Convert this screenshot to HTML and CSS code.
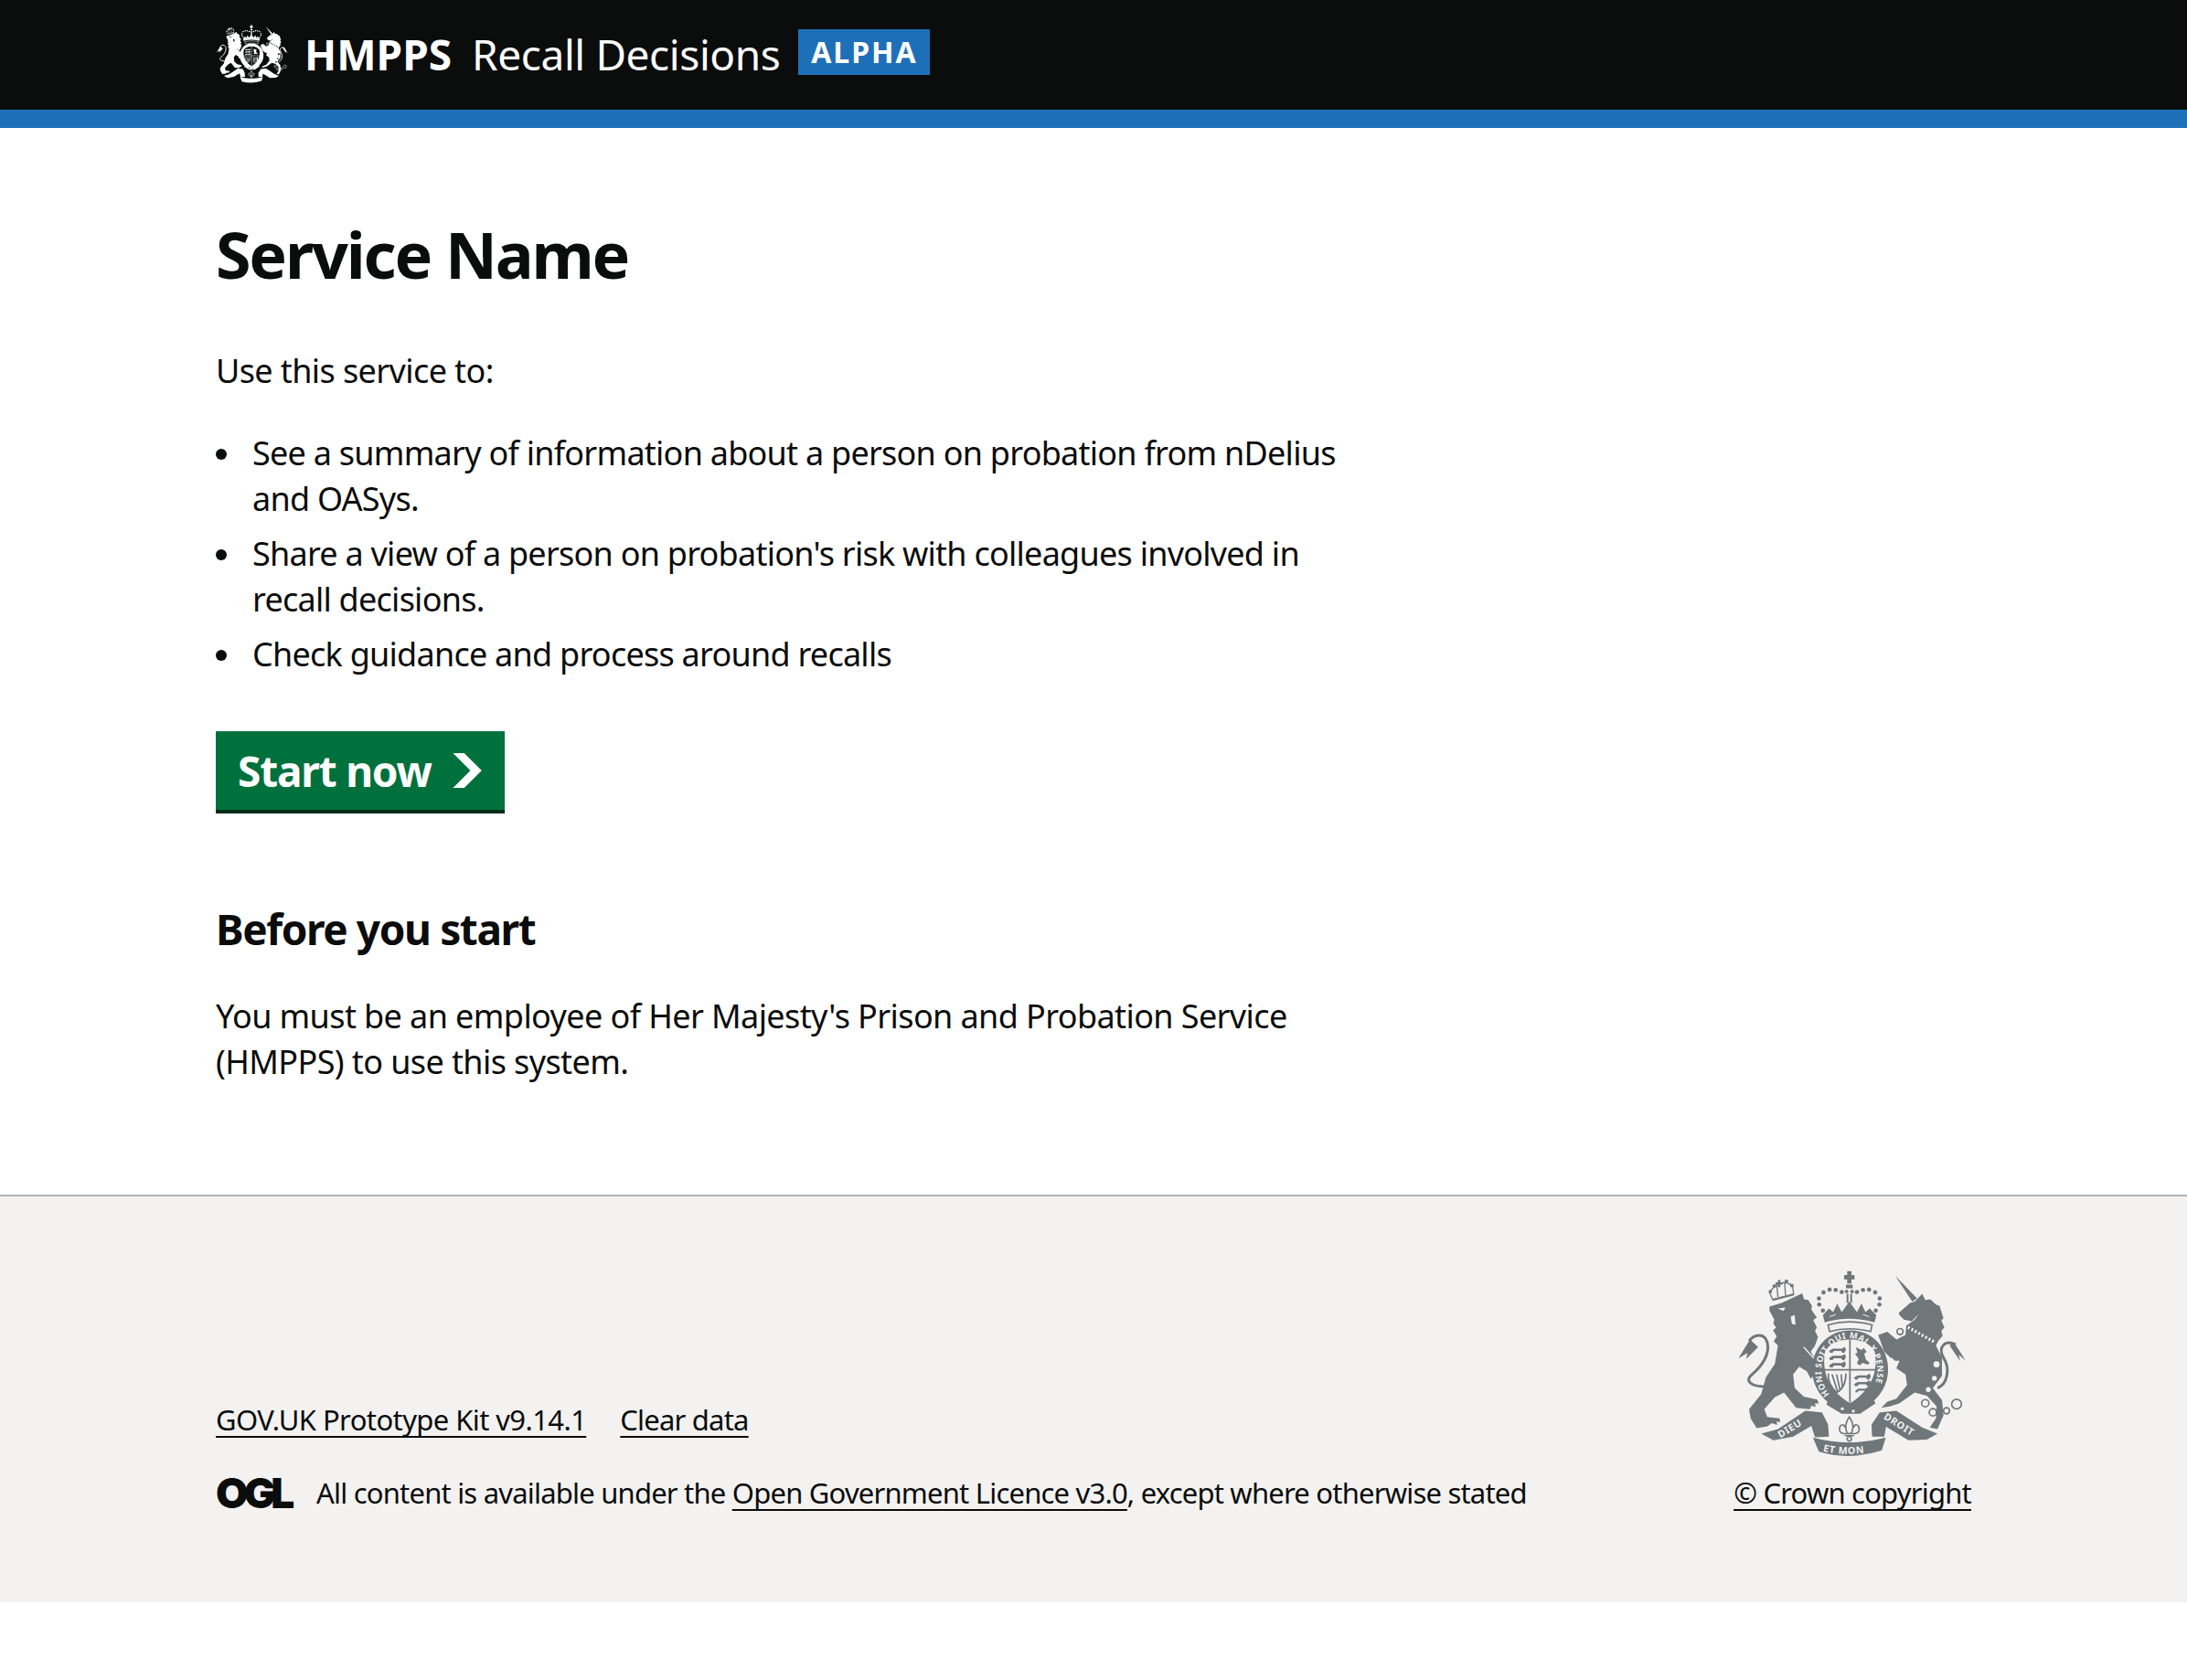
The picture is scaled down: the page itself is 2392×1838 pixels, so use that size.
FILE: index.html
```html
<!DOCTYPE html>
<html lang="en">
<head>
    <meta charset="UTF-8">
    <meta name="viewport" content="width=device-width, initial-scale=1.0">
    <title>Service Name - Recall Decisions</title>
    <link rel="stylesheet" href="styles.css">
</head>
<body>
    <header class="site-header">
        <div class="width-container header-inner">
            <svg class="header-crest" viewBox="110 50 770 620" aria-hidden="true"><use href="#crestArt"/></svg>
            <span class="header-org">HMPPS</span>
            <span class="header-service">Recall Decisions</span>
            <strong class="tag">ALPHA</strong>
        </div>
    </header>

    <main class="width-container main-wrapper">
        <div class="two-thirds">
            <h1 class="heading-l">Service Name</h1>
            <p class="body">Use this service to:</p>
            <ul class="bullets">
                <li>See a summary of information about a person on probation from nDelius and OASys.</li>
                <li>Share a view of a person on probation's risk with colleagues involved in recall decisions.</li>
                <li>Check guidance and process around recalls</li>
            </ul>
            <a href="#" class="button-start">
                <span>Start now</span>
                <svg class="button-icon" viewBox="0 0 33 40" aria-hidden="true"><path d="M0 0h13l20 20-20 20H0l20-20z"/></svg>
            </a>
            <h2 class="heading-m">Before you start</h2>
            <p class="body body-last">You must be an employee of Her Majesty's Prison and Probation Service (HMPPS) to use this system.</p>
        </div>
    </main>

    <footer class="site-footer">
        <div class="width-container footer-inner">
            <div class="footer-meta">
                <ul class="footer-links">
                    <li><a href="#">GOV.UK Prototype Kit v9.14.1</a></li>
                    <li><a href="#">Clear data</a></li>
                </ul>
                <div class="licence">
                    <span class="ogl">OGL</span>
                    <span>All content is available under the <a href="#">Open Government Licence v3.0</a>, except where otherwise stated</span>
                </div>
            </div>
            <div class="copyright">
                <svg class="footer-crest" viewBox="110 50 770 620" aria-hidden="true">
                    <g id="crestArt">
                        <!-- lion -->
                        <path class="ink" d="M222 172L262 160L330 128L336 148L350 150L362 170L360 182L378 208L366 216L378 240L372 252L382 272L372 300L358 320L392 380L386 398L376 392L378 410L364 402L358 410L345 385L320 370L300 395L305 440L335 468L380 478L384 492L372 490L374 502L360 498L355 510L310 505L270 455L240 470L205 510L215 535L255 540L258 552L245 550L248 562L230 556L215 566L180 572L160 540L155 510L195 460L210 405L240 360L250 300L236 286L246 270L234 250L244 240L235 228L238 215L222 185Z"/>
                        <path class="line" stroke-width="9" d="M205 435C170 435 135 420 165 395C195 370 225 330 215 290C205 255 170 265 155 285"/>
                        <path class="ink" d="M158 280L120 342L150 325L145 345L185 305Z"/>
                        <path class="cut" d="M250 178L275 175L268 186ZM292 205L305 200L308 232L296 228Z"/>
                        <path class="cut-line" stroke-width="4" d="M335 305L388 365"/>
                        <path class="line" stroke-width="7" d="M232 150L302 132"/>
                        <path class="line" stroke-width="4" d="M222 124Q262 74 298 104L302 132M232 148L222 124M250 140L246 100M275 134L272 92"/>
                        <path class="ink" d="M250 84H258V92H266V99H258V108H250V99H242V92H250Z"/>
                        <circle class="ink" cx="225" cy="122" r="6"/><circle class="ink" cx="238" cy="104" r="6"/><circle class="ink" cx="278" cy="88" r="6"/><circle class="ink" cx="296" cy="103" r="6"/>
                        <!-- unicorn -->
                        <path class="ink" d="M636 70L708 145L692 155ZM648 192L685 160L700 155L725 130L735 150L752 148L770 165L782 170L795 210L788 218L798 240L788 252L792 268L778 285L770 300L790 340L790 400L760 440L790 480L795 530L775 575L750 570L770 540L772 500L740 465L700 455L650 490L620 500L590 505L610 485L640 475L675 430L670 395L640 375L650 350L620 340L600 320L580 265L610 255L640 280L670 265L672 235L700 215L715 195L690 220L665 215L650 200Z"/>
                        <path class="line" stroke-width="9" d="M775 440C805 430 820 380 795 340C775 305 800 280 835 297"/>
                        <path class="ink" d="M830 290L868 350L845 330L850 352L815 300Z"/>
                        <path class="cut-line" stroke-width="10" stroke-dasharray="6 7" d="M678 240L768 290"/>
                        <circle class="cut" cx="772" cy="362" r="10"/><circle class="cut" cx="765" cy="408" r="8"/><circle class="cut" cx="745" cy="445" r="8"/>
                        <circle class="ring" cx="735" cy="490" r="12"/><circle class="ring" cx="760" cy="520" r="12"/><circle class="ring" cx="805" cy="515" r="10"/><circle class="ring" cx="838" cy="493" r="16"/>
                        <circle class="ring" cx="652" cy="254" r="10"/><circle class="ring" cx="640" cy="338" r="10"/>
                        <!-- royal crown -->
                        <path class="ink" d="M478 55H492V68H502V82H492V96H478V82H468V68H478ZM474 100H496V112H474ZM476 130H482V160H476ZM488 130H494V160H488ZM398 200L418 178L432 190L445 162L460 190L485 155L510 190L525 162L538 190L552 178L574 200L568 224Q485 200 404 224Z"/>
                        <g class="ink">
                            <circle cx="398" cy="185" r="7"/><circle cx="386" cy="165" r="7"/><circle cx="385" cy="145" r="7"/><circle cx="400" cy="125" r="7"/><circle cx="420" cy="116" r="7"/><circle cx="440" cy="117" r="7"/><circle cx="460" cy="124" r="7"/><circle cx="476" cy="122" r="6"/>
                            <circle cx="572" cy="185" r="7"/><circle cx="584" cy="165" r="7"/><circle cx="585" cy="145" r="7"/><circle cx="570" cy="125" r="7"/><circle cx="550" cy="116" r="7"/><circle cx="530" cy="117" r="7"/><circle cx="510" cy="124" r="7"/><circle cx="494" cy="122" r="6"/>
                        </g>
                        <path class="cut-line" stroke-width="3" d="M420 205L440 198M530 198L550 205"/>
                        <!-- garter and shield -->
                        <path class="ink" d="M487 250C565 250 618 315 612 390C607 450 562 505 487 518C412 505 367 450 362 385C360 315 410 250 487 250Z"/>
                        <path class="band" d="M415 232Q485 212 560 232L555 254Q485 236 420 254Z"/>
                        <path class="cut" d="M405 320C420 292 450 280 487 280C524 280 552 292 569 320C578 370 570 440 487 490C404 440 396 370 405 320Z"/>
                        <path class="line" stroke-width="5" d="M487 280V488M399 380H575"/>
                        <path class="ink" d="M418 318l12-8h30l10-6 4 10-6 10h-6l-4-6h-24l-4 6h-8ZM418 342l12-8h30l10-6 4 10-6 10h-6l-4-6h-24l-4 6h-8ZM418 366l12-8h30l10-6 4 10-6 10h-6l-4-6h-24l-4 6h-8ZM500 406l12-8h30l10-6 4 10-6 10h-6l-4-6h-24l-4 6h-8ZM500 428l12-8h30l10-6 4 10-6 10h-6l-4-6h-24l-4 6h-8ZM504 450l10-8h24l8-5 3 9-5 8h-5l-3-5h-20l-4 5h-6ZM506 305l20 10 6-8 10 14-8 6 6 20 12 10-6 6-18-6-8 8-10-6 6-14-12-18 8-4Z"/>
                        <path class="line" stroke-width="5" d="M416 392Q413 425 443 455Q473 440 474 392M428 395L446 450M443 395L454 445M458 395L462 435"/>
                        <path class="ink" d="M415 478L470 495L540 495L565 480L572 490L520 525H460L410 495Z"/>
                        <circle class="cut" cx="462" cy="508" r="5"/><circle class="cut" cx="498" cy="516" r="5"/>
                        <!-- motto ribbon -->
                        <path class="ink" d="M195 590L250 575L340 515L395 520L415 560L418 600L372 602L360 565L300 600L235 612ZM775 590L725 570L640 515L585 520L558 560L560 600L600 600L606 568L680 612L740 610ZM365 603Q485 635 605 603L592 645Q485 680 385 650Z"/>
                        <path class="fleur" d="M485 535Q505 565 491 590H479Q465 565 485 535ZM477 590Q445 592 455 565Q465 555 472 570M493 590Q525 592 515 565Q505 555 498 570M470 597H500M485 597Q470 610 485 615Q500 610 485 597"/>
                    </g>
                    <path id="garterArc" fill="none" d="M420 461A92 108 0 1 1 550 461"/>
                    <path id="dieuArc" fill="none" d="M258 605L365 540"/>
                    <path id="droitArc" fill="none" d="M596 540L700 605"/>
                    <path id="etArc" fill="none" d="M398 648Q485 668 575 645"/>
                    <text class="crest-text garter"><textPath href="#garterArc">HONI SOIT QUI MAL Y PENSE</textPath></text>
                    <text class="crest-text motto"><textPath href="#dieuArc">DIEU</textPath></text>
                    <text class="crest-text motto"><textPath href="#droitArc">DROIT</textPath></text>
                    <text class="crest-text motto"><textPath href="#etArc">ET MON</textPath></text>
                </svg>
                <a href="#">© Crown copyright</a>
            </div>
        </div>
    </footer>
</body>
</html>
```

FILE: styles.css
```css
/* Base */
body {
    margin: 0;
    font-family: "Noto Sans", Arial, sans-serif;
    color: #0b0c0c;
    background: white;
}

a {
    color: #0b0c0c;
    text-decoration-thickness: 2px;
    text-underline-offset: 6px;
    text-decoration-skip-ink: none;
}

.width-container {
    width: 1920px;
    margin: 0 auto;
}

/* Crest parts */
.ink {
    fill: currentColor;
}

.line {
    fill: none;
    stroke: currentColor;
}

.ring {
    fill: none;
    stroke: currentColor;
    stroke-width: 5;
}

.fleur {
    fill: none;
    stroke: currentColor;
    stroke-width: 5;
}

.band {
    fill: var(--crest-bg);
    stroke: currentColor;
    stroke-width: 5;
}

.cut {
    fill: var(--crest-bg);
}

.cut-line {
    fill: none;
    stroke: var(--crest-bg);
}

.crest-text {
    fill: var(--crest-bg);
    font-family: "Noto Sans", Arial, sans-serif;
    font-weight: 700;
}

.garter {
    font-size: 28px;
    letter-spacing: 1.5px;
}

.motto {
    font-size: 32px;
    letter-spacing: 2px;
}

/* Header */
.site-header {
    height: 120px;
    background-color: #0b0c0c;
    border-bottom: 20px solid #1d70b8;
    color: white;
}

.header-inner {
    display: flex;
    align-items: flex-start;
    height: 120px;
}

.header-crest {
    --crest-bg: #0b0c0c;
    width: 80px;
    height: 68px;
    margin: 25px 17px 0 0;
    color: white;
}

.header-org {
    margin-top: 28px;
    font-size: 46px;
    line-height: 62px;
    font-weight: 700;
}

.header-service {
    margin: 28px 0 0 22px;
    font-size: 46px;
    line-height: 62px;
    letter-spacing: -0.4px;
}

.tag {
    margin: 32px 0 0 20px;
    width: 144px;
    height: 50px;
    line-height: 50px;
    text-align: center;
    background-color: #1d70b8;
    color: white;
    font-size: 32px;
    font-weight: 700;
    letter-spacing: 2px;
}

/* Main */
.main-wrapper {
    padding-top: 98px;
    padding-bottom: 120px;
}

.two-thirds {
    width: 1240px;
}

.heading-l {
    margin: 0 0 63px;
    font-size: 70px;
    line-height: 80px;
    font-weight: 700;
    letter-spacing: -2.2px;
}

.heading-m {
    margin: 96px 0 41px;
    font-size: 46px;
    line-height: 60px;
    font-weight: 700;
    letter-spacing: -1.4px;
}

.body {
    margin: 0 0 40px;
    font-size: 36px;
    line-height: 50px;
    letter-spacing: -0.6px;
}

.body-last {
    margin-bottom: 0;
}

.bullets {
    margin: 0 0 59px;
    padding-left: 40px;
    list-style: none;
    font-size: 36px;
    line-height: 50px;
    letter-spacing: -0.75px;
}

.bullets li {
    position: relative;
    margin-bottom: 10px;
}

.bullets li:last-child {
    margin-bottom: 0;
}

.bullets li::before {
    content: "";
    position: absolute;
    left: -40px;
    top: 20px;
    width: 12px;
    height: 12px;
    border-radius: 50%;
    background: #0b0c0c;
}

.button-start {
    display: inline-flex;
    align-items: center;
    gap: 22px;
    box-sizing: border-box;
    width: 316px;
    height: 90px;
    padding: 0 24px 4px;
    background-color: #00703c;
    box-shadow: inset 0 -4px 0 #002d18;
    color: white;
    font-size: 46px;
    font-weight: 700;
    letter-spacing: -1.2px;
    white-space: nowrap;
    text-decoration: none;
    vertical-align: top;
}

.button-icon {
    width: 35px;
    height: 38px;
    fill: white;
}

/* Footer */
.site-footer {
    background-color: #f3f2f1;
    border-top: 2px solid #b1b4b6;
    height: 444px;
    font-size: 31px;
    line-height: 40px;
    letter-spacing: -0.8px;
}

.footer-inner {
    display: flex;
    justify-content: space-between;
    align-items: flex-end;
    height: 344px;
}

.footer-links {
    display: flex;
    gap: 37px;
    margin: 0 0 40px;
    padding: 0;
    list-style: none;
}

.footer-links li:first-child {
    letter-spacing: -0.6px;
}

.licence {
    display: flex;
    align-items: center;
    gap: 28px;
}

.ogl {
    width: 82px;
    font-family: "Inter", sans-serif;
    font-size: 46px;
    font-weight: 900;
    letter-spacing: -5px;
    line-height: 40px;
}

.copyright {
    display: flex;
    flex-direction: column;
    align-items: center;
    gap: 18px;
}

.footer-crest {
    --crest-bg: #f3f2f1;
    width: 256px;
    height: 206px;
    color: #6f777b;
}
```
